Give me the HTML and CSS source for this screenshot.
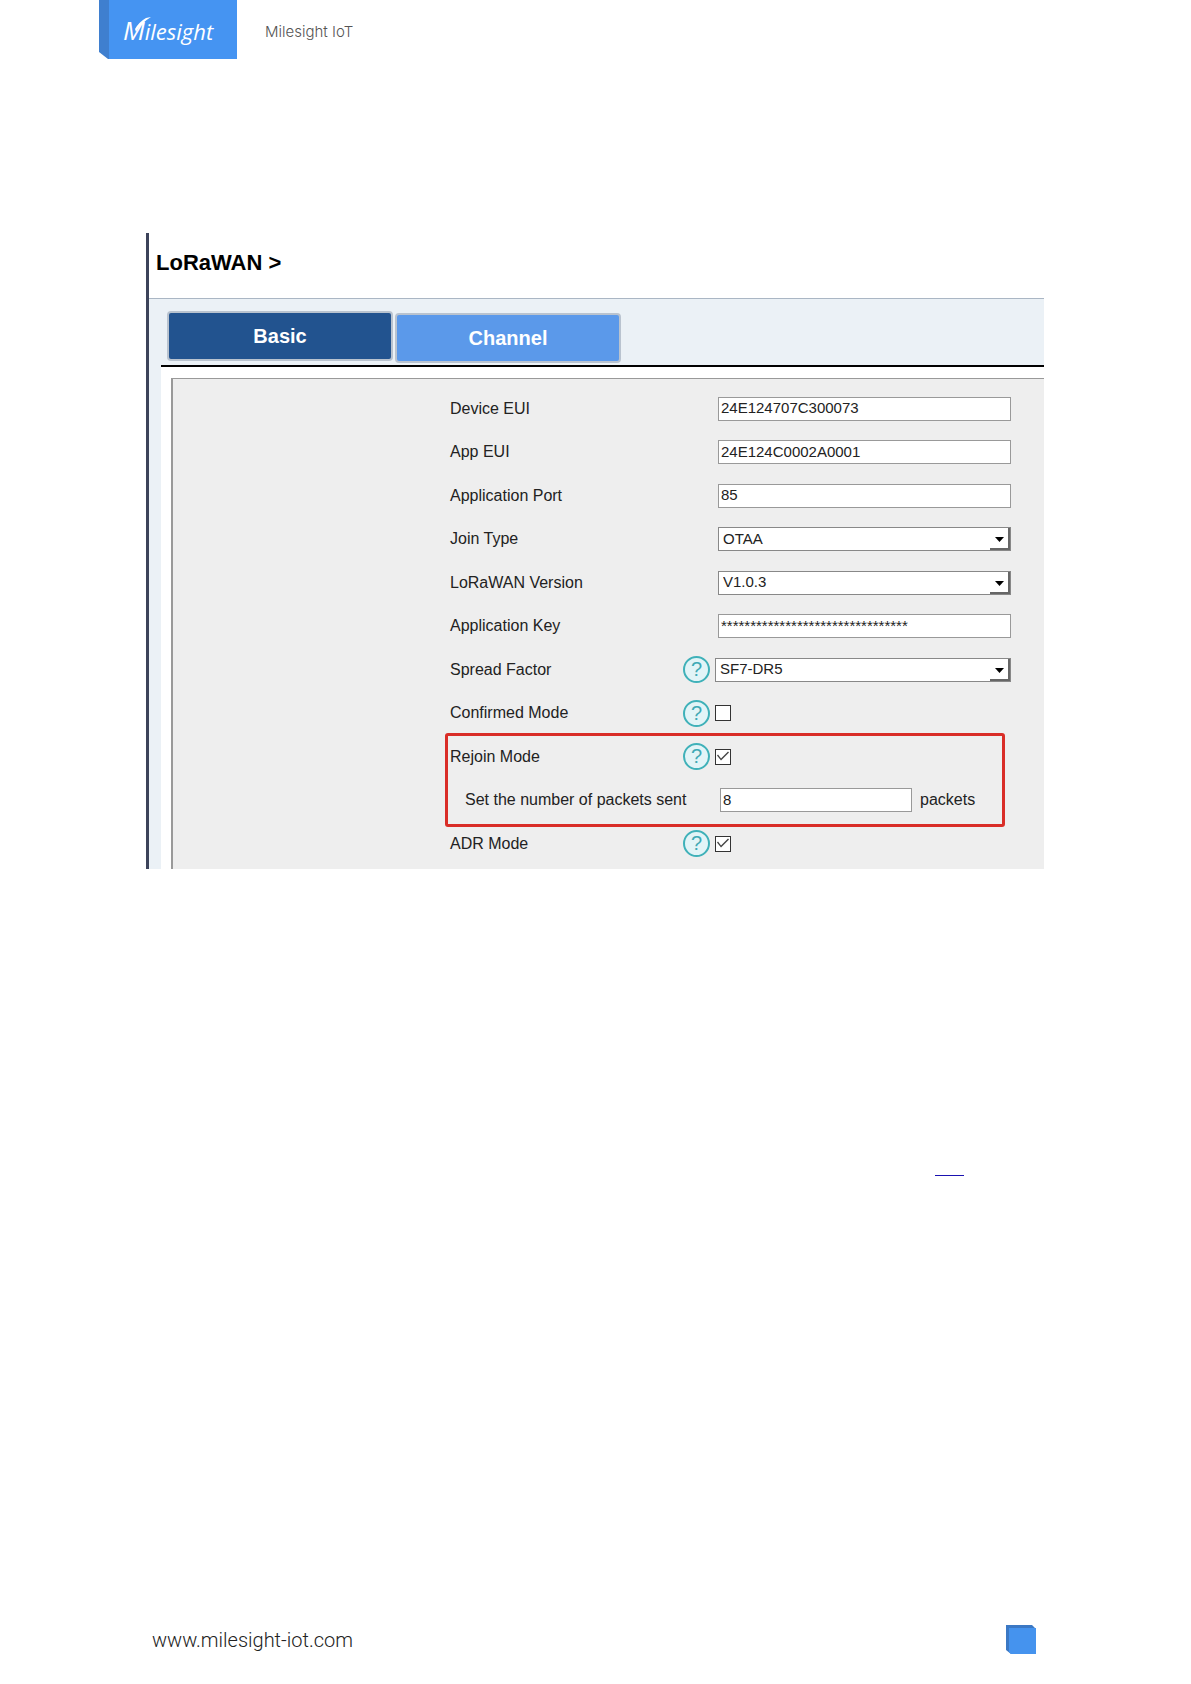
FILE: index.html
```html
<!DOCTYPE html>
<html lang="en">
<head>
<meta charset="utf-8">
<meta name="viewport" content="width=device-width, initial-scale=1">
<title>Milesight IoT</title>
<link rel="stylesheet" href="styles.css">
</head>
<body>
<header class="page-header">
  <div class="logo">
    <span class="logo-initial">M<svg class="logo-swash" width="16" height="16" viewBox="0 0 16 16" aria-hidden="true"><path d="M1 15Q6 6 16 0L11 1Q4 5 0 12Z" fill="#fff"/></svg></span><span class="logo-rest">ilesight</span>
  </div>
  <span class="brand">Milesight IoT</span>
</header>

<main class="page-main">
  <section class="panel">
    <h1 class="panel-title">LoRaWAN &gt;</h1>
    <div class="panel-body">
      <nav class="tabs">
        <button type="button" class="tab tab-active">Basic</button>
        <button type="button" class="tab">Channel</button>
      </nav>
      <div class="sheet">
        <form class="form">
          <div class="row"><label class="label" for="dev">Device EUI</label><span class="help-slot"></span><input class="field" id="dev" type="text" value="24E124707C300073"></div>
          <div class="row"><label class="label" for="app">App EUI</label><span class="help-slot"></span><input class="field" id="app" type="text" value="24E124C0002A0001"></div>
          <div class="row"><label class="label" for="port">Application Port</label><span class="help-slot"></span><input class="field" id="port" type="text" value="85"></div>
          <div class="row"><label class="label" for="join">Join Type</label><span class="help-slot"></span><select class="field select" id="join"><option>OTAA</option></select></div>
          <div class="row"><label class="label" for="ver">LoRaWAN Version</label><span class="help-slot"></span><select class="field select" id="ver"><option>V1.0.3</option></select></div>
          <div class="row"><label class="label" for="key">Application Key</label><span class="help-slot"></span><input class="field" id="key" type="text" value="********************************"></div>
          <div class="row"><label class="label" for="sf">Spread Factor</label><span class="help-slot"><button type="button" class="help">?</button></span><select class="field select field-wide" id="sf"><option>SF7-DR5</option></select></div>
          <div class="row"><label class="label" for="conf">Confirmed Mode</label><span class="help-slot"><button type="button" class="help">?</button></span><input class="check" id="conf" type="checkbox"></div>
          <div class="group">
            <div class="row"><label class="label" for="rejoin">Rejoin Mode</label><span class="help-slot"><button type="button" class="help">?</button></span><input class="check" id="rejoin" type="checkbox" checked></div>
            <div class="row"><label class="label label-sub" for="count">Set the number of packets sent</label><span class="help-slot"></span><input class="field field-short" id="count" type="text" value="8"><span class="unit">packets</span></div>
          </div>
          <div class="row"><label class="label" for="adr">ADR Mode</label><span class="help-slot"><button type="button" class="help">?</button></span><input class="check" id="adr" type="checkbox" checked></div>
        </form>
      </div>
    </div>
  </section>
  <a class="blank-link" href="#" aria-label="here"></a>
</main>

<footer class="page-footer">
  <a class="site" href="#">www.milesight-iot.com</a>
  <svg class="page-mark" width="30" height="30" viewBox="0 0 30 30" aria-hidden="true">
    <path d="M0 0H26L30 4V29H5L0 25Z" fill="#3b78c4"/>
    <path d="M3 3H30V29H5L3 27Z" fill="#4593ee"/>
  </svg>
</footer>
</body>
</html>
```
FILE: styles.css
```css
* { box-sizing: border-box; }

body {
  margin: 0;
  min-height: 100vh;
  display: flex;
  flex-direction: column;
  background: #fff;
  color: #222;
  font-family: "Liberation Sans", Arial, sans-serif;
  font-size: 16px;
}

.page-header {
  display: flex;
  gap: 28px;
  height: 59px;
  padding-left: 99px;
}

.logo {
  display: flex;
  align-items: baseline;
  width: 138px;
  padding: 14px 0 0 24px;
  background: linear-gradient(90deg, #3f7fcf 10px, #4594f2 10px);
  clip-path: polygon(0 0, 100% 0, 100% 100%, 9px 100%, 0 52px);
  color: #fff;
  font-family: "Open Sans", sans-serif;
  font-style: italic;
  font-weight: 400;
  line-height: 32px;
}

.logo-initial {
  position: relative;
  font-size: 26px;
}

.logo-swash {
  position: absolute;
  top: 3px;
  right: -6px;
}

.logo-rest { font-size: 22px; }

.brand {
  color: #555;
  font-family: Inter, sans-serif;
  font-size: 15px;
  font-weight: 300;
  line-height: 64px;
}

.page-main {
  display: flex;
  flex-direction: column;
  padding: 174px 147px 0 146px;
}

.panel { border-left: 3px solid #3c435a; }

.panel-title {
  margin: 0;
  padding: 0 0 5px 7px;
  border-bottom: 1px solid #aab6c4;
  color: #000;
  font-size: 22px;
  line-height: 60px;
}

.panel-body {
  padding-left: 12px;
  background: #ebf1f6;
}

.tabs {
  display: flex;
  gap: 2px;
  padding: 12px 0 0 6px;
  height: 66px;
}

.tab {
  width: 226px;
  height: 50px;
  margin-top: 2px;
  padding: 0;
  border: 2px solid #b9c3cf;
  border-radius: 4px;
  background: #5b99ea;
  color: #fff;
  font-family: inherit;
  font-size: 20px;
  font-weight: bold;
}

.tab-active {
  margin-top: 0;
  background: #22538f;
}

.sheet {
  padding: 11px 0 0 10px;
  border-top: 2px solid #000;
  background: #fff;
}

.form {
  padding: 8px 33px 4px 277px;
  border: solid #999;
  border-width: 1px 0 0 2px;
  background: #eee;
}

.row {
  display: flex;
  align-items: center;
  height: 43px;
}

.row:nth-child(even) { height: 44px; }
.form > .row:last-child { height: 43px; }

.label { width: 233px; }
.label-sub { padding-left: 15px; white-space: nowrap; }
.help-slot { display: flex; width: 32px; }

.help {
  width: 27px;
  height: 27px;
  padding: 0;
  border: 2px solid #3fb1b9;
  border-radius: 50%;
  background: #e2f4f7;
  color: #3fa9b5;
  font-family: inherit;
  font-size: 20px;
  line-height: 23px;
}

.field {
  flex: 1;
  min-width: 0;
  height: 24px;
  margin: 0 0 0 3px;
  padding: 0 2px 2px;
  border: 1px solid #999;
  border-radius: 0;
  background: #fff;
  color: #222;
  font-family: inherit;
  font-size: 15px;
}

.select {
  appearance: none;
  padding-left: 4px;
  border-color: #888;
  background: #fff url("data:image/svg+xml,%3Csvg xmlns='http://www.w3.org/2000/svg' width='20' height='22'%3E%3Cpath d='M0 21H19V0' fill='none' stroke='%23666' stroke-width='2'/%3E%3Cpath d='M5 9H14L9.500 14Z'/%3E%3C/svg%3E") no-repeat right top;
}

.field-wide { margin-left: 0; }

.field-short {
  flex: none;
  width: 192px;
  margin-left: 5px;
}

.unit { padding-left: 8px; }

.check {
  appearance: none;
  width: 16px;
  height: 16px;
  margin: 0;
  border: 1px solid #333;
  background: #fff;
}

.check:checked::before {
  content: "";
  display: block;
  height: 14px;
  background: #444;
  clip-path: polygon(1px 6px, 2px 5px, 5px 9px, 12px 2px, 13px 3px, 5px 11px);
}

.group { position: relative; }

.group::after {
  content: "";
  position: absolute;
  inset: -2px 6px -5px -5px;
  border: 3px solid #d92d27;
  border-radius: 3px;
  pointer-events: none;
}

.blank-link {
  align-self: flex-end;
  width: 29px;
  height: 16px;
  margin: 291px 80px 0 0;
  border-bottom: 1px solid #1a12b0;
}

.page-footer {
  display: flex;
  align-items: center;
  justify-content: space-between;
  margin-top: auto;
  padding: 0 155px 29px 152px;
}

.site {
  color: #222;
  font-family: Roboto, sans-serif;
  font-size: 20px;
  font-weight: 300;
  text-decoration: none;
}
```
